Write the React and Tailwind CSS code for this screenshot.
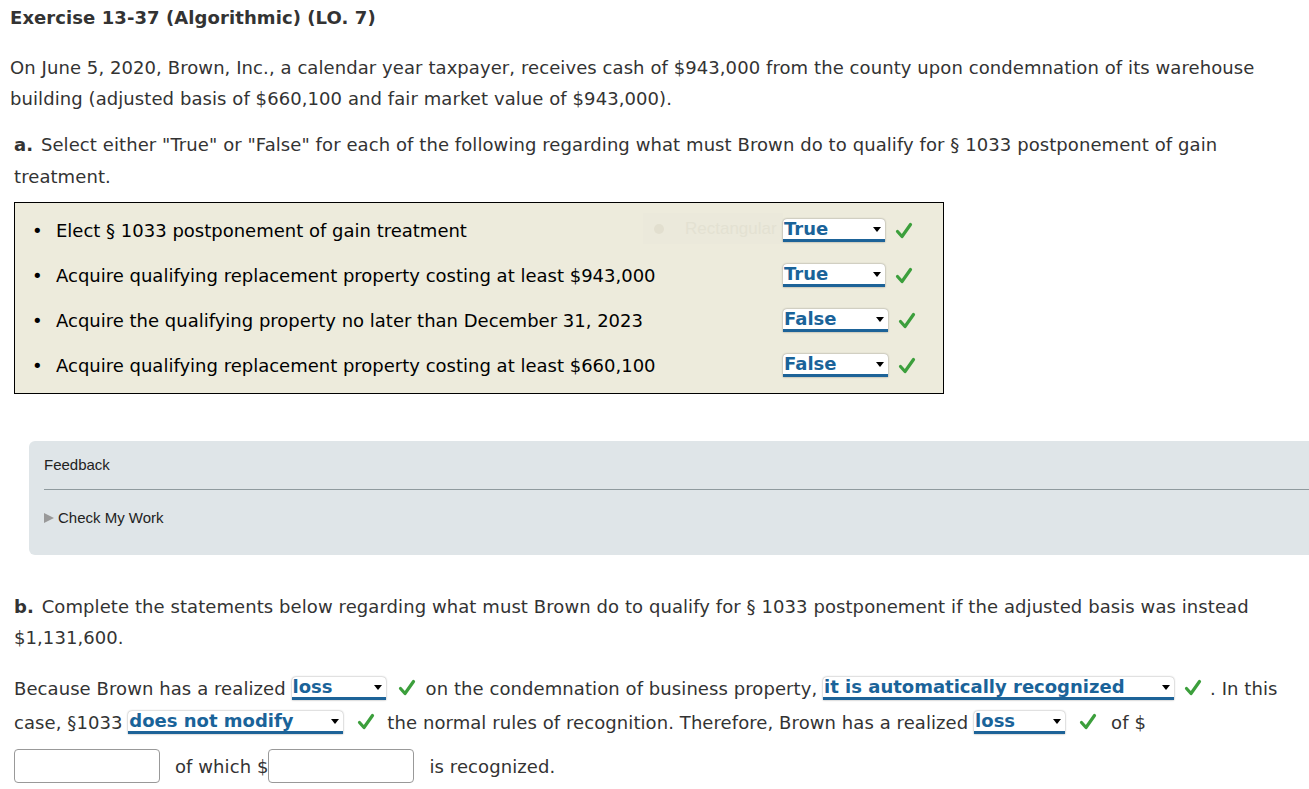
import React from 'react';

const Check = () => (
  <svg width="20" height="20" viewBox="0 0 20 20" className="inline-block align-middle">
    <path d="M3.5 10.5 L8 15.5 L16.5 3.5" fill="none" stroke="#3c9f3c" strokeWidth="3.2" strokeLinecap="round" strokeLinejoin="round" />
  </svg>
);

const Pick = ({ value, w }) => (
  <span
    className="relative inline-block shrink-0 align-middle h-[23px] bg-white rounded-t-[4px] shadow-[0_0_2px_rgba(0,0,0,0.45)] border-b-[3px] border-[#1d6398] text-[#1a6399] font-bold leading-[19px] pl-[1px] text-left tracking-normal"
    style={{ width: w }}
  >
    {value}
    <span className="absolute right-[4px] top-[8px] w-0 h-0 border-l-[4px] border-r-[4px] border-t-[5px] border-l-transparent border-r-transparent border-t-black" />
  </span>
);

const rows = [
  ['Elect § 1033 postponement of gain treatment', 'True', 102],
  ['Acquire qualifying replacement property costing at least $943,000', 'True', 102],
  ['Acquire the qualifying property no later than December 31, 2023', 'False', 105],
  ['Acquire qualifying replacement property costing at least $660,100', 'False', 105],
];

export default function App() {
  return (
    <div className="w-[1309px] min-h-[789px] overflow-hidden bg-white text-[#333] text-[18px] tracking-[0.08px] font-['DejaVu_Sans',Verdana,sans-serif]">
      <div className="pl-[10px] pt-[7px] pr-[45px]">
        <h1 className="font-bold text-[18px] leading-[22px]">Exercise 13-37 (Algorithmic) (LO. 7)</h1>
        <p className="mt-[23px] leading-[31px]">
          On June 5, 2020, Brown, Inc., a calendar year taxpayer, receives cash of $943,000 from the county upon condemnation of its warehouse building (adjusted basis of $660,100 and fair market value of $943,000).
        </p>
      </div>

      <div className="pl-[14px] mt-[15px]">
        <p className="leading-[32px] pr-[45px]">
          <b className="mr-[2px]">a.</b> Select either "True" or "False" for each of the following regarding what must Brown do to qualify for § 1033 postponement of gain treatment.
        </p>
        <div className="relative mt-[9px] w-[930px] h-[192px] border border-black bg-[#edebdc] pt-[5px] tracking-normal">
          <div className="absolute left-[628px] top-[10px] w-[140px] h-[31px] overflow-hidden bg-[#ebe9db] flex items-center text-[#e3e1d2] font-['Liberation_Sans',Arial,sans-serif] text-[17px] whitespace-nowrap">
            <span className="ml-[11px] w-[10px] h-[10px] rounded-full bg-[#e2dfcf]" />
            <span className="ml-[21px]">Rectangular</span>
          </div>
          {rows.map(([t, v, w], i) => (
            <div key={i} className="flex items-center h-[45px]">
              <span className="w-[24px] pl-[17px] text-black">•</span>
              <span className="ml-[17px] w-[727px] text-black whitespace-nowrap">{t}</span>
              <Pick value={v} w={w} />
              <span className="ml-[9px] flex"><Check /></span>
            </div>
          ))}
        </div>
      </div>

      <div className="ml-[29px] mt-[47px] h-[114px] rounded-l-[6px] bg-[#dfe5e8] pl-[15px] pt-[15px] font-['Liberation_Sans',Arial,sans-serif] text-[15px] tracking-normal text-[#222]">
        <div className="leading-[18px]">Feedback</div>
        <div className="mt-[15px] h-px bg-[#8f9a9e]" />
        <div className="mt-[19px] flex items-center leading-[18px]">
          <span className="w-0 h-0 border-t-[5px] border-b-[5px] border-l-[10px] border-t-transparent border-b-transparent border-l-[#999] mr-[4px]" />
          Check My Work
        </div>
      </div>

      <div className="pl-[14px] mt-[36px]">
        <p className="leading-[31px] pr-[45px]">
          <b className="mr-[2px]">b.</b> Complete the statements below regarding what must Brown do to qualify for § 1033 postponement if the adjusted basis was instead $1,131,600.
        </p>
        <div className="mt-[18px]">
          <div className="flex items-center h-[34px] whitespace-nowrap">
            <span>Because Brown has a realized&nbsp;</span>
            <Pick value="loss" w={94} />
            <span className="ml-[11px] mr-[9px] flex"><Check /></span>
            <span>on the condemnation of business property,&nbsp;</span>
            <Pick value="it is automatically recognized" w={351} />
            <span className="ml-[9px] mr-[7px] flex"><Check /></span>
            <span>. In this</span>
          </div>
          <div className="flex items-center h-[34px] whitespace-nowrap">
            <span>case, §1033&nbsp;</span>
            <Pick value="does not modify" w={215} />
            <span className="ml-[13px] mr-[11px] flex"><Check /></span>
            <span>the normal rules of recognition. Therefore, Brown has a realized&nbsp;</span>
            <Pick value="loss" w={91} />
            <span className="ml-[13px] mr-[13px] flex"><Check /></span>
            <span>of $</span>
          </div>
          <div className="flex items-center mt-[10px] h-[34px] whitespace-nowrap">
            <input className="w-[146px] h-[34px] border border-[#999] rounded-[4px] bg-white" />
            <span className="ml-[15px]">of which $</span>
            <input className="w-[146px] h-[34px] border border-[#999] rounded-[4px] bg-white" />
            <span className="ml-[15px]">is recognized.</span>
          </div>
        </div>
      </div>
    </div>
  );
}
